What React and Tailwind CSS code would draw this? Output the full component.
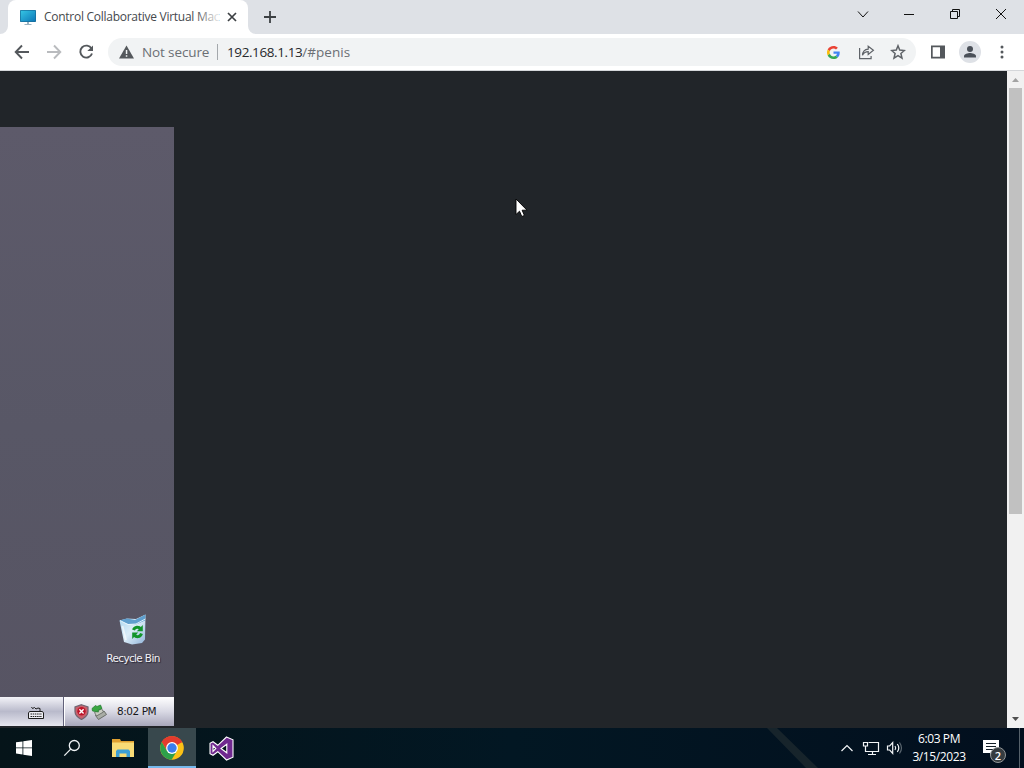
import React from 'react';

const ui = "font-['Open_Sans','Noto_Sans',sans-serif]";

// Chrome logo, used on the taskbar
const ChromeLogo = () => (
  <svg width="24" height="24" viewBox="0 0 24 24">
    <circle cx="12" cy="12" r="11.8" fill="#fbc116" />
    <path d="M12 12 L1.8 6.1 A11.8 11.8 0 0 1 22.2 6.1 Z" fill="#e33b2e" />
    <path d="M12 6.3 H22.3 A11.8 11.8 0 0 0 1.8 6.1 L7 15 Z" fill="#e33b2e" />
    <path d="M1.8 6.1 A11.8 11.8 0 0 0 11.6 23.8 L16.9 14.9 L7 14.9 Z" fill="#2da04a" />
    <circle cx="12" cy="12" r="5.9" fill="#fff" />
    <circle cx="12" cy="12" r="4.7" fill="#3b7ded" />
  </svg>
);

const GoogleG = () => (
  <svg width="13" height="13" viewBox="0 0 48 48">
    <path fill="#EA4335" d="M24 9.500c3.540 0 6.710 1.220 9.210 3.600l6.850-6.850C35.900 2.380 30.470 0 24 0 14.620 0 6.510 5.380 2.560 13.220l7.980 6.190C12.430 13.720 17.740 9.500 24 9.500z" />
    <path fill="#4285F4" d="M46.980 24.550c0-1.570-.15-3.090-.38-4.550H24v9.020h12.940c-.58 2.960-2.260 5.480-4.780 7.180l7.730 6c4.510-4.180 7.090-10.360 7.090-17.650z" />
    <path fill="#FBBC05" d="M10.530 28.590c-.48-1.450-.76-2.990-.76-4.590s.27-3.140.76-4.590l-7.980-6.190C.92 16.460 0 20.120 0 24s.92 7.540 2.560 10.780l7.970-6.190z" />
    <path fill="#34A853" d="M24 48c6.480 0 11.930-2.130 15.890-5.810l-7.730-6c-2.150 1.450-4.920 2.300-8.160 2.300-6.260 0-11.570-4.220-13.470-9.910l-7.980 6.190C6.510 42.620 14.620 48 24 48z" />
  </svg>
);

function TabStrip() {
  return (
    <div className="flex h-[34px] w-full bg-[#dee1e6]">
      <div className="relative ml-2 flex h-[34px] w-60 items-center rounded-t-lg bg-white pl-3">
        {/* curved feet of the tab */}
        <svg className="absolute -left-2 bottom-0" width="8" height="8">
          <path d="M8 0 V8 H0 A8 8 0 0 0 8 0 Z" fill="#fff" />
        </svg>
        <svg className="absolute -right-2 bottom-0" width="8" height="8">
          <path d="M0 0 V8 H8 A8 8 0 0 1 0 0 Z" fill="#fff" />
        </svg>
        <svg width="16" height="16" viewBox="0 0 16 16" className="shrink-0">
          <defs>
            <linearGradient id="mon" x1="0" y1="0" x2="1" y2="1">
              <stop offset="0" stopColor="#35c5e4" />
              <stop offset="1" stopColor="#0d78b8" />
            </linearGradient>
          </defs>
          <rect x="0" y="1" width="16" height="12" rx="0.8" fill="#176b98" />
          <rect x="0.700" y="1.700" width="14.600" height="10.600" fill="url(#mon)" />
          <path d="M7 13h2v2h2.500v1h-7v-1H7z" fill="#9ab2c0" />
        </svg>
        <div className="relative ml-2 h-5 w-[175px] whitespace-nowrap text-[12px] leading-5 tracking-[-0.27px] text-[#45494d]">
          Control Collaborative Virtual Mac
          <div className="absolute right-0 top-0 h-5 w-6 bg-linear-to-r from-white/0 to-white/90" />
        </div>
        <svg className="ml-1" width="18" height="18" viewBox="0 0 18 18" stroke="#3c4043" strokeWidth="1.700">
          <path d="M5 5l8 8M13 5l-8 8" />
        </svg>
      </div>
      <svg className="ml-[13px] mt-2" width="18" height="18" viewBox="0 0 18 18" stroke="#3c4043" strokeWidth="1.800">
        <path d="M9 3v12M3 9h12" />
      </svg>
      <svg className="ml-auto" width="184" height="28" viewBox="840 0 184 28" fill="none" stroke="#111" strokeWidth="1">
        <path d="M858 11.500l5 5.500 5-5.500" />
        <path d="M904 14.500h10" />
        <path d="M950.500 11.500h7v7h-7zM952.500 11.500v-2h7v7h-2" />
        <path d="M996 9l10 10M1006 9l-10 10" />
      </svg>
    </div>
  );
}

function Toolbar() {
  return (
    <div className="flex h-[37px] w-full items-center border-b border-[#d5d7da] bg-white">
      <svg width="108" height="36" viewBox="0 34 108 36" fill="none" strokeWidth="1.900">
        <path d="M29 52H16M22 45.500L15.700 52L22 58.500" stroke="#54585c" />
        <path d="M47 52H60M54 45.500L60.300 52L54 58.500" stroke="#b9bbbe" />
        <path d="M91.500 48.600A6 6 0 1 0 92 53.500" stroke="#54585c" />
        <path d="M93 45.500V51H87.300z" fill="#54585c" stroke="none" />
      </svg>
      <div className="flex h-7 w-[808px] items-center rounded-full bg-[#f1f3f4] text-[13.500px]">
        <svg className="ml-[11px]" width="15" height="14" viewBox="0 0 15 14">
          <path d="M7.500 0.500L15 13.500H0z" fill="#54585c" />
          <path d="M6.800 5h1.500v4H6.800zM6.800 10.200h1.500v1.500H6.800z" fill="#f1f3f4" />
        </svg>
        <span className="ml-2 w-[68px] whitespace-nowrap tracking-[-0.12px] text-[#6b6f74]">Not secure</span>
        <div className="ml-[7px] h-4 w-px bg-[#a4a8ac]" />
        <span className="ml-[9px] whitespace-nowrap tracking-[-0.4px] text-[#27292c]">
          192.168.1.13<span className="tracking-[0.02px] text-[#6b6f74]">/#penis</span>
        </span>
        <div className="ml-auto mr-[10px] flex items-center">
          <GoogleG />
          <svg className="ml-[18px]" width="17" height="16" viewBox="0 0 17 16" fill="none" stroke="#5f6368" strokeWidth="1.200">
            <path d="M1.600 4v10.600h11.500V12" />
            <path d="M4.500 11.300C4.700 7.800 6.800 5.400 10.200 5.100V2.200L15.400 6.300L10.200 10.400V7.700C7.600 7.700 5.800 8.800 4.500 11.300z" />
          </svg>
          <svg className="ml-[15px]" width="16" height="16" viewBox="0 0 16 16" fill="none" stroke="#5f6368" strokeWidth="1.500">
            <path d="M8 1.800l1.700 4.300 4.700.4-3.500 3 1.100 4.600L8 11.700l-4 2.400 1.100-4.600-3.500-3 4.700-.4z" />
          </svg>
        </div>
      </div>
      <svg className="ml-[15px]" width="14" height="14" viewBox="0 0 14 14">
        <path fillRule="evenodd" d="M0 0.500h14v13H0zM1.700 2.200v9.600H9V2.200z" fill="#54585c" />
      </svg>
      <svg className="ml-[14px]" width="22" height="22" viewBox="0 0 22 22">
        <circle cx="11" cy="11" r="11" fill="#dee1e6" />
        <circle cx="11" cy="8" r="3" fill="#4a5058" />
        <path d="M5 16.500v-1.300c0-2.100 4-3.100 6-3.100s6 1 6 3.100v1.300z" fill="#4a5058" />
      </svg>
      <svg className="ml-[19px]" width="4" height="14" fill="#54585c">
        <circle cx="2" cy="2" r="1.500" />
        <circle cx="2" cy="7" r="1.500" />
        <circle cx="2" cy="12" r="1.500" />
      </svg>
    </div>
  );
}

function RecycleBin() {
  return (
    <svg width="30" height="32" viewBox="0 0 30 32">
      <defs>
        <linearGradient id="bin" x1="0" y1="0" x2="1" y2="1">
          <stop offset="0" stopColor="#a9d5f0" />
          <stop offset="0.500" stopColor="#dcedf8" />
          <stop offset="1" stopColor="#8fb2d8" />
        </linearGradient>
      </defs>
      <path d="M1.500 6.500L9 4.500l9 0.500 9.500-4.500L27 25.500l-3 3.500-10 1.500-8-2.500z" fill="url(#bin)" />
      <path d="M1.500 6.500L9 4.500l8 1.500L27.500 0.500l-0.500 6L18 10.500 10 10z" fill="#5f9fce" />
      <path d="M2 6.500l8 4 8-0.500 9.300-5" stroke="#eefaff" strokeWidth="0.900" fill="none" />
      <path d="M4.500 12l3.500 14" stroke="#fff" strokeWidth="1.800" opacity="0.600" />
      <g fill="none" stroke="#12952b" strokeWidth="3">
        <path d="M15.500 16c1.200-3.500 5.500-3.500 7-1.200" />
        <path d="M23.500 19.500c-1.200 3.800-5.300 4-7.200 1.500" />
      </g>
      <path d="M24.800 11v6.200h-6zM14.200 25v-6.500h6z" fill="#12952b" />
    </svg>
  );
}

// Remote desktop, partly visible on the left edge of the page
function VmDisplay() {
  return (
    <div className="flex h-[599px] w-[174px] flex-col bg-linear-to-b from-[#5d5a6a] via-[#585766] to-[#575463]">
      <div className="ml-[93px] mt-[487px] flex w-20 flex-col items-center">
        <RecycleBin />
        <span className="mt-1 whitespace-nowrap font-['DejaVu_Sans','Noto_Sans',sans-serif] text-[10.500px] leading-4 tracking-[-0.65px] text-[#f1f1f5] [text-shadow:1px_1px_1px_#282634]">
          Recycle Bin
        </span>
      </div>
      <div className="mt-auto flex h-[29px]">
        <div className="flex w-16 items-center border-r border-[#62617a] bg-linear-to-b from-[#f3f3f8] via-[#b9bacb] to-[#e7e7ef] pl-[27px]">
          <svg className="mt-0.5" width="18" height="14" viewBox="0 0 18 14" fill="none" stroke="#1c1c1c">
            <path d="M4.500 1l1 1.500 2-1 1.500 1.500 2-1 2 0.500v2.500" />
            <path d="M2.500 5.500h13l1 1.500v5.500h-15V7z" fill="#eeeef3" />
            <path d="M3.500 8h11.500M3.500 10.500h11.500" strokeDasharray="1.500 0.700" />
          </svg>
        </div>
        <div className="flex flex-1 items-center border-l border-white bg-linear-to-b from-[#ffffff] via-[#d9d9e4] to-[#a8a7bb] pl-[9px]">
          <svg width="15" height="16" viewBox="0 0 15 16">
            <path d="M7.500 0.700L14 3v4.500c0 4-3.500 6.500-6.500 8-3-1.500-6.500-4-6.500-8V3z" fill="#c9606c" stroke="#6d6672" strokeWidth="1.200" />
            <circle cx="7.500" cy="7.300" r="4.200" fill="#bd1529" />
            <path d="M5.400 5.200l4.200 4.200M9.600 5.200L5.400 9.400" stroke="#fff" strokeWidth="1.400" />
          </svg>
          <svg className="ml-[2px]" width="16" height="16" viewBox="0 0 16 16">
            <path d="M4.500 11.500l8.500-4.500 2.500 3.500-8 5z" fill="#a9ada6" stroke="#61655f" strokeWidth="0.900" />
            <path d="M3.500 8.500l7-4 2 3.500-7 4z" fill="#c9ccc2" stroke="#61655f" strokeWidth="0.800" />
            <path d="M1 4.500l3.500-3 1.500 1 3.500-1.500 1.500 3.500-4 2 0.500 1.500-3.500-.5-2.500-.5z" fill="#39a642" stroke="#237a30" strokeWidth="0.700" />
          </svg>
          <span className="ml-[10px] whitespace-nowrap font-['DejaVu_Sans','Noto_Sans',sans-serif] text-[10.500px] tracking-[-0.45px] text-[#171719]">8:02 PM</span>
        </div>
      </div>
    </div>
  );
}

function Scrollbar() {
  return (
    <div className="flex w-[17px] flex-col items-center bg-[#f1f1f1]">
      <svg width="17" height="17"><path d="M5 11l3.500-4 3.500 4z" fill="#a3a3a3" /></svg>
      <div className="h-[426px] w-[13px] bg-[#c1c1c1]" />
      <svg className="mt-auto" width="17" height="17"><path d="M5 6l3.500 4L12 6z" fill="#4f4f4f" /></svg>
    </div>
  );
}

function Taskbar() {
  return (
    <div className="relative flex h-10 w-full bg-linear-to-r from-[#051419] via-[#021723] to-[#020f1e] text-white">
      {/* streak of the wallpaper behind the bar */}
      <svg className="absolute left-[760px] top-0" width="70" height="40">
        <path d="M7 0h10l41 40H46z" fill="#17242b" />
      </svg>
      <div className="flex w-12 items-center justify-center">
        <svg width="16" height="16" viewBox="0 0 16 16" fill="#fff">
          <path d="M0 2.300l6.500-.9v6.100H0zM7.300 1.300L16 0v7.500H7.300zM0 8.300h6.500v6.200L0 13.600zM7.300 8.300H16V16l-8.700-1.300z" />
        </svg>
      </div>
      <div className="flex w-12 items-center justify-center">
        <svg width="18" height="18" viewBox="0 0 18 18" fill="none" stroke="#eef2f4" strokeWidth="1.300">
          <circle cx="11.300" cy="6.500" r="5" />
          <path d="M7.700 10.100L1.300 16.600" />
        </svg>
      </div>
      <div className="flex w-[52px] items-center justify-center pl-0.5">
        <svg width="22" height="18" viewBox="0 0 22 18">
          <path d="M0 0h8l1 2h13v16H0z" fill="#e0a030" />
          <path d="M0 3.500h22V18H0z" fill="#f9dc76" />
          <path d="M4 18v-6l1.500-1.500h11L18 12v6h-3.500v-3.500h-7V18z" fill="#3d9fd5" />
        </svg>
      </div>
      <div className="flex w-12 items-center justify-center border-b-2 border-[#76b9ed] bg-[#38484d] pt-0.5">
        <ChromeLogo />
      </div>
      <div className="flex w-[50px] items-center justify-center">
        <svg width="25" height="25" viewBox="0 0 25 25">
          <path fillRule="evenodd" d="M17.500 1L24 3.800v17.400L17.500 24l-8.700-8.300L4 19.300 1 17.700V7.300l3-1.600 4.800 3.600zM17.800 8.200l-5.800 4.300 5.800 4.300zM4 9.700v5.600l2.800-2.800z" fill="#70298f" stroke="#fff" strokeWidth="1.100" />
        </svg>
      </div>
      <div className="ml-auto flex">
        <svg width="68" height="40" viewBox="838 728 68 40" fill="none" stroke="#f2f5f7" strokeWidth="1.200">
          <path d="M841.500 751l5.500-5.500 5.500 5.500" />
          <path d="M868.500 742.500h10v9h-11.500M872.500 752v3M868 754.500h8" />
          <path d="M863.500 742.500h4v3.500h-4zM865.500 746v5.500h2" />
          <path d="M887.500 746h2.200l3-3.500v11l-3-3.500h-2.200z" />
          <path d="M895 746q1.500 2 0 4M897.300 744q3 4 0 8" />
          <path d="M899.500 742.500q4 5.500 0 11" stroke="#59656e" />
        </svg>
        <div className="flex w-[66px] flex-col items-center whitespace-nowrap pt-0.5 text-[12px] leading-[18px] tracking-[-0.4px]">
          <span>6:03 PM</span>
          <span className="tracking-[-0.4px]">3/15/2023</span>
        </div>
        <div className="relative w-[47px] pl-[11px] pt-3">
          <svg width="16" height="17" viewBox="0 0 16 17">
            <path d="M0 0h16v13h-6L7 16v-3H0z" fill="#fff" />
            <path d="M3 3.500h10M3 6.500h10M3 9.500h7" stroke="#152029" />
          </svg>
          <div className="absolute left-[18px] top-[19px] flex size-4 items-center justify-center rounded-full border border-[#929698] bg-[#363c40] text-[11px] font-semibold leading-none">2</div>
        </div>
        <div className="w-[5px] border-l border-[#56616a]" />
      </div>
    </div>
  );
}

export default function App() {
  return (
    <div className={`relative flex h-[768px] w-[1024px] flex-col overflow-hidden ${ui}`}>
      <TabStrip />
      <Toolbar />
      <div className="flex h-[657px]">
        <div className="flex-1 bg-[#212529] pt-14">
          <VmDisplay />
        </div>
        <Scrollbar />
      </div>
      <Taskbar />
      {/* mouse pointer */}
      <svg className="absolute left-[515px] top-[198px]" width="13" height="20" viewBox="0 0 13 20">
        <path d="M1 1v15.500l3.500-3.300 2.300 5.300 2.600-1.100L7.100 12.200H12z" fill="#fff" stroke="#000" strokeWidth="0.900" />
      </svg>
    </div>
  );
}
